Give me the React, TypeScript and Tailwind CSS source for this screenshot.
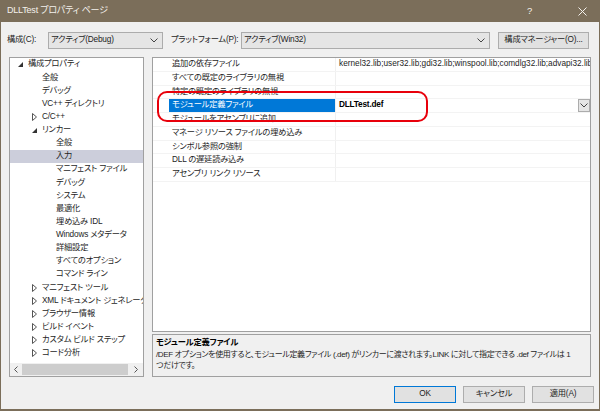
import React from "react";

type TreeItem = { t: string; l: 0 | 1 | 2; a?: "open" | "closed"; sel?: boolean };

const tree: TreeItem[] = [
  { t: "構成プロパティ", l: 0, a: "open" },
  { t: "全般", l: 1 },
  { t: "デバッグ", l: 1 },
  { t: "VC++ ディレクトリ", l: 1 },
  { t: "C/C++", l: 1, a: "closed" },
  { t: "リンカー", l: 1, a: "open" },
  { t: "全般", l: 2 },
  { t: "入力", l: 2, sel: true },
  { t: "マニフェスト ファイル", l: 2 },
  { t: "デバッグ", l: 2 },
  { t: "システム", l: 2 },
  { t: "最適化", l: 2 },
  { t: "埋め込み IDL", l: 2 },
  { t: "Windows メタデータ", l: 2 },
  { t: "詳細設定", l: 2 },
  { t: "すべてのオプション", l: 2 },
  { t: "コマンド ライン", l: 2 },
  { t: "マニフェスト ツール", l: 1, a: "closed" },
  { t: "XML ドキュメント ジェネレーター", l: 1, a: "closed" },
  { t: "ブラウザー情報", l: 1, a: "closed" },
  { t: "ビルド イベント", l: 1, a: "closed" },
  { t: "カスタム ビルド ステップ", l: 1, a: "closed" },
  { t: "コード分析", l: 1, a: "closed" },
];

const levelPad = ["pl-[8px]", "pl-[22px]", "pl-[36px]"];

const props: { n: string; v?: string; bold?: boolean; sel?: boolean }[] = [
  { n: "追加の依存ファイル", v: "kernel32.lib;user32.lib;gdi32.lib;winspool.lib;comdlg32.lib;advapi32.lib;shell32.lib;ole32.lib" },
  { n: "すべての既定のライブラリの無視" },
  { n: "特定の既定のライブラリの無視" },
  { n: "モジュール定義ファイル", v: "DLLTest.def", bold: true, sel: true },
  { n: "モジュールをアセンブリに追加" },
  { n: "マネージ リソース ファイルの埋め込み" },
  { n: "シンボル参照の強制" },
  { n: "DLL の遅延読み込み" },
  { n: "アセンブリ リンク リソース" },
];

function Chevron({ cls = "" }: { cls?: string }) {
  return (
    <svg width="8" height="5" viewBox="0 0 8 5" className={cls}>
      <path d="M0.5 0.5 L4 4 L7.5 0.5" fill="none" stroke="#444" strokeWidth="1" />
    </svg>
  );
}

function Arrow({ a }: { a?: "open" | "closed" }) {
  if (a === "open")
    return (
      <svg width="5" height="5" viewBox="0 0 5 5">
        <path d="M5 0 L5 5 L0 5 Z" fill="#333" />
      </svg>
    );
  if (a === "closed")
    return (
      <svg width="5" height="8" viewBox="0 0 5 8">
        <path d="M0.5 0.5 L4.5 4 L0.5 7.5 Z" fill="none" stroke="#555" strokeWidth="1" />
      </svg>
    );
  return null;
}

export default function App() {
  return (
    <div className="w-[600px] h-[411px] bg-[#7b6e5a] flex flex-col font-['Liberation_Sans','Noto_Sans_CJK_JP',sans-serif] [font-feature-settings:'palt'] text-[8.25px] tracking-[-0.2px] text-[#1e1e1e] overflow-hidden">
      {/* Title bar */}
      <div className="h-[22px] shrink-0 flex items-center pl-[7px] text-[#f4f1ec]">
        <span className="text-[9px]">DLLTest プロパティ ページ</span>
        <span className="ml-auto mr-[46px] text-[9.5px]">?</span>
        <svg width="9" height="9" viewBox="0 0 9 9" className="mr-[13px]">
          <path d="M0.5 0.5 L8.5 8.5 M8.5 0.5 L0.5 8.5" stroke="#f4f1ec" strokeWidth="1" />
        </svg>
      </div>

      {/* Body */}
      <div className="flex-1 mx-[1px] mb-[2px] bg-[#f0f0f0] flex flex-col">
        {/* Top row */}
        <div className="mt-[10px] h-[17px] flex items-center">
          <span className="ml-[6px] w-[41px] whitespace-nowrap">構成(C):</span>
          <div className="w-[115px] h-[17px] bg-[#e5e5e5] border border-[#acacac] flex items-center pl-[2px] pr-[4px] whitespace-nowrap">
            <span>アクティブ(Debug)</span>
            <Chevron cls="ml-auto" />
          </div>
          <span className="ml-[8px] w-[70px] whitespace-nowrap">プラットフォーム(P):</span>
          <div className="w-[249px] h-[17px] bg-[#e5e5e5] border border-[#acacac] flex items-center pl-[2px] pr-[4px] whitespace-nowrap">
            <span>アクティブ(Win32)</span>
            <Chevron cls="ml-auto" />
          </div>
          <div className="ml-[8px] w-[91px] h-[17px] bg-[#e1e1e1] border border-[#adadad] flex items-center justify-center whitespace-nowrap">
            構成マネージャー(O)...
          </div>
        </div>

        {/* Main area */}
        <div className="mt-[8px] flex h-[320px]">
          {/* Tree */}
          <div className="ml-[8px] w-[135px] h-[320px] bg-white border border-[#a0a0a0] flex flex-col overflow-hidden">
            {tree.map((it, i) => (
              <div
                key={i}
                className={`h-[13.14px] shrink-0 flex items-center whitespace-nowrap ${levelPad[it.l]} ${it.sel ? "bg-[#cccedb]" : ""}`}
              >
                <div className="w-[10px] shrink-0 flex items-center">
                  <Arrow a={it.a} />
                </div>
                <span>{it.t}</span>
              </div>
            ))}
            <div className="mt-auto h-[13px] bg-[#f0f0f0] flex items-center">
              <div className="w-[12px] flex justify-center">
                <svg width="4" height="7" viewBox="0 0 4 7">
                  <path d="M3.5 0.5 L0.5 3.5 L3.5 6.5" fill="none" stroke="#555" strokeWidth="1" />
                </svg>
              </div>
              <div className="w-[106px] h-[11px] bg-[#cdcdcd]" />
              <div className="ml-auto w-[14px] flex justify-center">
                <svg width="4" height="7" viewBox="0 0 4 7">
                  <path d="M0.5 0.5 L3.5 3.5 L0.5 6.5" fill="none" stroke="#555" strokeWidth="1" />
                </svg>
              </div>
            </div>
          </div>

          {/* Right column */}
          <div className="ml-[8px] w-[439px] flex flex-col">
            <div className="relative h-[275px] bg-white border border-[#a0a0a0] overflow-hidden">
              {props.map((p, i) => (
                <div key={i} className="h-[13.75px] flex border-b border-[#f3f3f3]">
                  <div className="w-[16px] shrink-0" />
                  <div
                    className={`w-[167px] shrink-0 flex items-center pl-[3px] whitespace-nowrap overflow-hidden border-r border-[#f0f0f0] ${p.sel ? "bg-[#0078d7] text-white" : ""}`}
                  >
                    {p.n}
                  </div>
                  <div className="flex-1 min-w-0 flex items-center pl-[3px] whitespace-nowrap overflow-hidden relative">
                    <span className={p.bold ? "font-bold text-black" : "tracking-[0px]"}>{p.v}</span>
                    {p.sel && (
                      <div className="absolute right-0 top-[0px] w-[12px] h-[13px] bg-[#e5e5e5] border border-[#acacac] flex items-center justify-center">
                        <Chevron />
                      </div>
                    )}
                  </div>
                </div>
              ))}
              {/* red annotation */}
              <div className="absolute left-[4px] top-[33px] w-[271px] h-[31px] border-[2px] border-[#e8000b] rounded-[10px]" />
            </div>
            <div className="mt-[2px] h-[43px] bg-[#f0f0f0] border border-[#a0a0a0] pl-[3px] pt-[2px] leading-[11.5px] overflow-hidden">
              <div className="font-bold text-black">モジュール定義ファイル</div>
              <div className="whitespace-nowrap text-[8px] tracking-[-0.35px]">
                /DEF オプションを使用すると、モジュール定義ファイル (.def) がリンカーに渡されます。LINK に対して指定できる .def ファイルは 1
              </div>
              <div className="whitespace-nowrap text-[8px] tracking-[-0.35px]">つだけです。</div>
            </div>
          </div>
        </div>

        {/* Buttons */}
        <div className="mt-[9px] h-[17px] flex justify-end gap-[7px] pr-[5px]">
          <div className="w-[62px] h-[17px] bg-[#e1e1e1] border border-[#0078d7] flex items-center justify-center">OK</div>
          <div className="w-[62px] h-[17px] bg-[#e1e1e1] border border-[#adadad] flex items-center justify-center">キャンセル</div>
          <div className="w-[62px] h-[17px] bg-[#e1e1e1] border border-[#adadad] flex items-center justify-center">適用(A)</div>
        </div>
      </div>
    </div>
  );
}
